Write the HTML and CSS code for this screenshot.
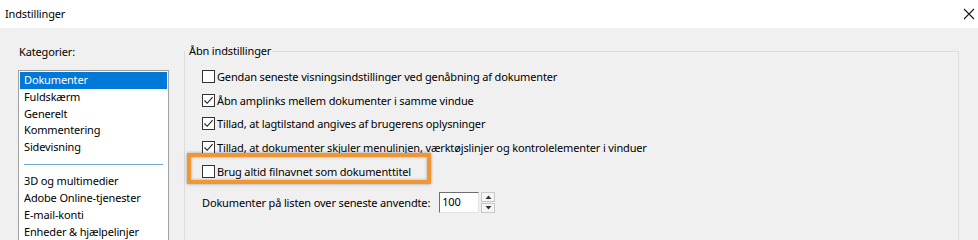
FILE: index.html
```html
<!DOCTYPE html>
<html lang="da">
<head>
<meta charset="utf-8">
<title>Indstillinger</title>
<link rel="stylesheet" href="styles.css">
</head>
<body>
<div class="window">
  <div class="titlebar">
    <span class="title">Indstillinger</span>
    <svg class="close" width="12" height="12" viewBox="0 0 12 12"><path d="M1 1 L11 11 M11 1 L1 11" stroke="#1a1a1a" stroke-width="1.1" fill="none"/></svg>
  </div>
  <div class="content">
    <div class="sidebar">
      <div class="label">Kategorier:</div>
      <div class="listbox">
        <div class="item selected">Dokumenter</div>
        <div class="item">Fuldskærm</div>
        <div class="item">Generelt</div>
        <div class="item">Kommentering</div>
        <div class="item">Sidevisning</div>
        <div class="sep"></div>
        <div class="item">3D og multimedier</div>
        <div class="item">Adobe Online-tjenester</div>
        <div class="item">E-mail-konti</div>
        <div class="item">Enheder &amp; hjælpelinjer</div>
      </div>
    </div>
    <fieldset class="group">
      <legend>Åbn indstillinger</legend>
      <div class="rows">
        <div class="row"><span class="cb"></span><span>Gendan seneste visningsindstillinger ved genåbning af dokumenter</span></div>
        <div class="row"><span class="cb"><svg width="11" height="11" viewBox="0 0 11 11"><path d="M1.5 5.5 L4.2 8.3 L9.6 2.2" stroke="#1a1a1a" stroke-width="1.1" fill="none"/></svg></span><span>Åbn amplinks mellem dokumenter i samme vindue</span></div>
        <div class="row"><span class="cb"><svg width="11" height="11" viewBox="0 0 11 11"><path d="M1.5 5.5 L4.2 8.3 L9.6 2.2" stroke="#1a1a1a" stroke-width="1.1" fill="none"/></svg></span><span>Tillad, at lagtilstand angives af brugerens oplysninger</span></div>
        <div class="row"><span class="cb"><svg width="11" height="11" viewBox="0 0 11 11"><path d="M1.5 5.5 L4.2 8.3 L9.6 2.2" stroke="#1a1a1a" stroke-width="1.1" fill="none"/></svg></span><span>Tillad, at dokumenter skjuler menulinjen, værktøjslinjer og kontrolelementer i vinduer</span></div>
        <div class="row highlighted"><span class="cb"></span><span>Brug altid filnavnet som dokumenttitel</span></div>
        <div class="row recent">
          <span>Dokumenter på listen over seneste anvendte:</span>
          <span class="num">100</span>
          <span class="spin">
            <span class="btn"><svg width="7" height="4" viewBox="0 0 7 4"><path d="M0.5 4 L3.5 0.5 L6.5 4 Z" fill="#333"/></svg></span>
            <span class="btn"><svg width="7" height="4" viewBox="0 0 7 4"><path d="M0.5 0 L3.5 3.5 L6.5 0 Z" fill="#333"/></svg></span>
          </span>
        </div>
      </div>
    </fieldset>
  </div>
</div>
</body>
</html>
```

FILE: styles.css
```css
html, body {
  margin: 0;
  padding: 0;
}
body {
  width: 978px;
  height: 240px;
  overflow: hidden;
  background: #f0f0f0;
  font-family: "Noto Sans", "DejaVu Sans", sans-serif;
  font-size: 11px;
  letter-spacing: -0.15px;
  color: #000;
}
.window {
  display: flex;
  flex-direction: column;
  height: 240px;
  overflow: hidden;
}
.titlebar {
  flex: none;
  height: 28px;
  background: #fff;
  display: flex;
  align-items: center;
  justify-content: space-between;
  padding: 0 3px 1px 5px;
  box-sizing: border-box;
}
.title {
  font-size: 11px;
}
.content {
  display: flex;
  padding: 15px 0 0 18px;
  flex: 1;
  min-height: 0;
  overflow: hidden;
}
.sidebar {
  width: 151px;
  flex: none;
  display: flex;
  flex-direction: column;
}
.label {
  height: 17px;
  line-height: 17px;
  margin-left: 1px;
  margin-bottom: 10px;
}
.listbox {
  background: #fff;
  border: 1px solid #a0a0a0;
  padding: 1px;
  height: 220px;
  flex: none;
}
.item {
  height: 16.75px;
  line-height: 16.75px;
  padding-left: 4px;
  white-space: nowrap;
}
.item.selected {
  background: #0078d7;
  color: #fff;
}
.sep {
  height: 1px;
  background: #6fa8d3;
  margin: 8px 4px 8.5px 4px;
}
.group {
  margin: 0 0 0 15px;
  width: 775px;
  flex: none;
  border: 1px solid #dcdcdc;
  border-bottom: none;
  padding: 0 0 0 17px;
  box-sizing: border-box;
  min-width: 0;
  height: 260px;
}
.group legend {
  padding: 0 3px 0 2px;
  margin-left: -17px;
  line-height: 16px;
  position: relative;
  left: 2px;
}
.rows {
  display: flex;
  flex-direction: column;
  padding-top: 6px;
}
.row {
  height: 23.6px;
  display: flex;
  align-items: center;
  gap: 2px;
  white-space: nowrap;
}
.cb {
  width: 11px;
  height: 11px;
  border: 1px solid #333;
  background: #fff;
  display: inline-flex;
  align-items: center;
  justify-content: center;
  flex: none;
}
.highlighted {
  position: relative;
}
.highlighted::after {
  content: "";
  position: absolute;
  left: -15px;
  top: -6px;
  width: 244px;
  height: 31px;
  box-sizing: border-box;
  border: 4px solid #f29533;
  box-shadow: 0 0 3px rgba(0,0,0,0.35), inset 0 0 3px rgba(0,0,0,0.3);
}
.recent {
  margin-top: 9px;
  height: 22px;
  gap: 0;
}
.num {
  width: 36px;
  height: 19px;
  margin-left: 9px;
  background: #fff;
  border-top: 1px solid #6e6e6e;
  border-left: 1px solid #6e6e6e;
  border-right: 1px solid #e3e3e3;
  border-bottom: 1px solid #e3e3e3;
  line-height: 17px;
  padding-left: 2px;
  box-sizing: content-box;
}
.spin {
  display: flex;
  flex-direction: column;
  margin-left: 2px;
  width: 14px;
  height: 21px;
  gap: 1px;
}
.btn {
  flex: 1;
  background: #f5f5f5;
  border: 1px solid #c8c8c8;
  display: flex;
  align-items: center;
  justify-content: center;
}
```
